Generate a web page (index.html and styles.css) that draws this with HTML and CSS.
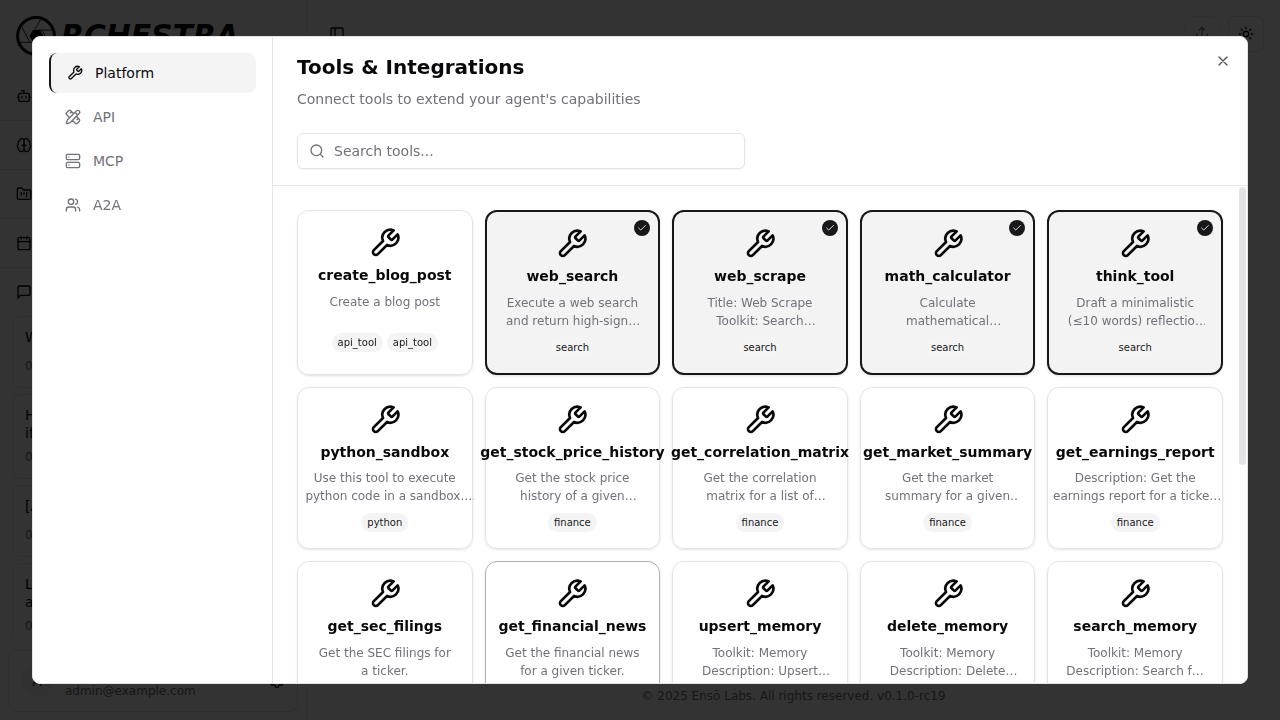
FILE: index.html
```
<!DOCTYPE html>
<html lang="en">

<head>
    <meta charset="utf-8">
    <title>Tools &amp; Integrations</title>
    <link rel="stylesheet" href="styles.css">
</head>

<body>
    <svg class="sprite" aria-hidden="true">
        <symbol id="wrench" viewBox="0 0 24 24"><path d="M14.7 6.3a1 1 0 0 0 0 1.4l1.6 1.6a1 1 0 0 0 1.4 0l3.77-3.77a6 6 0 0 1-7.94 7.94l-6.91 6.91a2.12 2.12 0 0 1-3-3l6.91-6.91a6 6 0 0 1 7.94-7.94l-3.76 3.76z"/></symbol>
        <symbol id="check" viewBox="0 0 24 24"><path d="M20 6 9 17l-5-5"/></symbol>
    </svg>

    <div class="app">
        <aside class="sidebar">
            <div class="logo">
                <svg class="logo-mark" viewBox="0 0 40 40">
                    <circle cx="20" cy="20" r="18.4" fill="none" stroke="#000" stroke-width="3"/>
                    <path d="M5.5 10.5 14 26.3M3 26.3h14M24.5 4 15 20M22 14h15M26 14l8.5 15.5M25 20l-9.5 16" fill="none" stroke="#000" stroke-width=".8"/>
                    <path d="M17 14h7l3.5 6-3.5 6h-7l-3.5-6z"/>
                </svg>
                <span class="logo-text">RCHESTRA</span>
            </div>
            <nav class="menu">
                <div class="menu-item"><svg class="icon" viewBox="0 0 24 24"><path d="M12 8V4H8M2 14h2M20 14h2M15 13v2M9 13v2"/><rect width="16" height="12" x="4" y="8" rx="2"/></svg></div>
                <div class="menu-item"><svg class="icon" viewBox="0 0 24 24"><path d="M12 5a3 3 0 1 0-5.997.125 4 4 0 0 0-2.526 5.77 4 4 0 0 0 .556 6.588A4 4 0 1 0 12 18ZM12 5a3 3 0 1 1 5.997.125 4 4 0 0 1 2.526 5.77 4 4 0 0 1-.556 6.588A4 4 0 1 1 12 18ZM15 13a4.5 4.5 0 0 1-3-4 4.5 4.5 0 0 1-3 4"/></svg></div>
                <div class="menu-item"><svg class="icon" viewBox="0 0 24 24"><path d="M4 20h16a2 2 0 0 0 2-2V8a2 2 0 0 0-2-2h-7.93a2 2 0 0 1-1.66-.9l-.82-1.2A2 2 0 0 0 7.93 3H4a2 2 0 0 0-2 2v13c0 1.1.9 2 2 2ZM8 10v4M12 10v2M16 10v6"/></svg></div>
                <div class="menu-item"><svg class="icon" viewBox="0 0 24 24"><path d="M8 2v4M16 2v4M3 10h18"/><rect width="18" height="18" x="3" y="4" rx="2"/></svg></div>
                <div class="menu-item"><svg class="icon" viewBox="0 0 24 24"><path d="M21 15a2 2 0 0 1-2 2H7l-4 4V5a2 2 0 0 1 2-2h14a2 2 0 0 1 2 2z"/></svg></div>
            </nav>
            <div class="threads">
                <div class="thread"><p>What</p><small>01</small></div>
                <div class="thread"><p>How<br>if</p><small>01</small></div>
                <div class="thread"><p>[API]</p><small>01</small></div>
                <div class="thread"><p>List<br>all</p><small>01</small></div>
            </div>
            <div class="account">
                <span class="avatar">A</span>
                <span class="email">admin@example.com</span>
                <svg class="icon" viewBox="0 0 24 24"><circle cx="12" cy="12" r="3"/><path d="M12.22 2h-.44a2 2 0 0 0-2 2v.18a2 2 0 0 1-1 1.73l-.43.25a2 2 0 0 1-2 0l-.15-.08a2 2 0 0 0-2.73.73l-.22.38a2 2 0 0 0 .73 2.73l.15.1a2 2 0 0 1 1 1.72v.51a2 2 0 0 1-1 1.74l-.15.09a2 2 0 0 0-.73 2.73l.22.38a2 2 0 0 0 2.73.73l.15-.08a2 2 0 0 1 2 0l.43.25a2 2 0 0 1 1 1.73V20a2 2 0 0 0 2 2h.44a2 2 0 0 0 2-2v-.18a2 2 0 0 1 1-1.73l.43-.25a2 2 0 0 1 2 0l.15.08a2 2 0 0 0 2.73-.73l.22-.39a2 2 0 0 0-.73-2.73l-.15-.08a2 2 0 0 1-1-1.74v-.5a2 2 0 0 1 1-1.74l.15-.09a2 2 0 0 0 .73-2.73l-.22-.38a2 2 0 0 0-2.73-.73l-.15.08a2 2 0 0 1-2 0l-.43-.25a2 2 0 0 1-1-1.73V4a2 2 0 0 0-2-2z"/></svg>
            </div>
        </aside>
        <div class="page">
            <header class="topbar">
                <svg class="icon" viewBox="0 0 24 24"><rect width="18" height="18" x="3" y="3" rx="2"/><path d="M9 3v18"/></svg>
                <span class="topbar-btn faded"><svg class="icon" viewBox="0 0 24 24"><path d="M12 2v13M16 6l-4-4-4 4M4 12v8a2 2 0 0 0 2 2h12a2 2 0 0 0 2-2v-8"/></svg></span>
                <span class="topbar-btn"><svg class="icon" viewBox="0 0 24 24"><circle cx="12" cy="12" r="4"/><path d="M12 2v2M12 20v2M4.93 4.93l1.41 1.41M17.66 17.66l1.41 1.41M2 12h2M20 12h2M6.34 17.66l-1.41 1.41M19.07 4.93l-1.41 1.41"/></svg></span>
            </header>
            <footer class="footer">© 2025 Ensō Labs. All rights reserved. v0.1.0-rc19</footer>
        </div>
    </div>

    <div class="overlay">
        <div class="dialog">
            <nav class="tabs">
                <a class="tab active"><svg class="icon"><use href="#wrench"/></svg>Platform</a>
                <a class="tab"><svg class="icon" viewBox="0 0 24 24"><path d="M13 7 8.7 2.7a2.41 2.41 0 0 0-3.4 0L2.7 5.3a2.41 2.41 0 0 0 0 3.4L7 13M8 6l2-2M18 16l2-2M17 11l4.3 4.3c.94.94.94 2.46 0 3.4l-2.6 2.6c-.94.94-2.46.94-3.4 0L11 17M21.174 6.812a1 1 0 0 0-3.986-3.987L3.842 16.174a2 2 0 0 0-.5.83l-1.321 4.352a.5.5 0 0 0 .623.622l4.353-1.32a2 2 0 0 0 .83-.497zM15 5l4 4"/></svg>API</a>
                <a class="tab"><svg class="icon" viewBox="0 0 24 24"><rect width="20" height="8" x="2" y="2" rx="2"/><rect width="20" height="8" x="2" y="14" rx="2"/><path d="M6 6h.01M6 18h.01"/></svg>MCP</a>
                <a class="tab"><svg class="icon" viewBox="0 0 24 24"><path d="M16 21v-2a4 4 0 0 0-4-4H6a4 4 0 0 0-4 4v2M22 21v-2a4 4 0 0 0-3-3.87M16 3.13a4 4 0 0 1 0 7.75"/><circle cx="9" cy="7" r="4"/></svg>A2A</a>
            </nav>

            <section class="panel">
                <header class="panel-header">
                    <h2>Tools &amp; Integrations</h2>
                    <p>Connect tools to extend your agent's capabilities</p>
                    <div class="search">
                        <svg class="icon" viewBox="0 0 24 24"><circle cx="11" cy="11" r="8"/><path d="m21 21-4.3-4.3"/></svg>
                        <span>Search tools...</span>
                    </div>
                </header>

                <div class="grid">
                    <div class="card">
                        <svg class="icon"><use href="#wrench"/></svg>
                        <h3>create_blog_post</h3>
                        <p>Create a blog post</p>
                        <div class="tags"><span>api_tool</span><span>api_tool</span></div>
                    </div>
                    <div class="card selected">
                        <span class="check"><svg class="icon"><use href="#check"/></svg></span>
                        <svg class="icon"><use href="#wrench"/></svg>
                        <h3>web_search</h3>
                        <p>Execute a web search and return high-signal results</p>
                        <div class="tags"><span>search</span></div>
                    </div>
                    <div class="card selected">
                        <span class="check"><svg class="icon"><use href="#check"/></svg></span>
                        <svg class="icon"><use href="#wrench"/></svg>
                        <h3>web_scrape</h3>
                        <p>Title: Web Scrape<br>Toolkit: Search<br>Description: Scrape</p>
                        <div class="tags"><span>search</span></div>
                    </div>
                    <div class="card selected">
                        <span class="check"><svg class="icon"><use href="#check"/></svg></span>
                        <svg class="icon"><use href="#wrench"/></svg>
                        <h3>math_calculator</h3>
                        <p>Calculate<br>mathematical expressions</p>
                        <div class="tags"><span>search</span></div>
                    </div>
                    <div class="card selected">
                        <span class="check"><svg class="icon"><use href="#check"/></svg></span>
                        <svg class="icon"><use href="#wrench"/></svg>
                        <h3>think_tool</h3>
                        <p>Draft a minimalistic (≤10 words) reflection on the next step</p>
                        <div class="tags"><span>search</span></div>
                    </div>

                    <div class="card">
                        <svg class="icon"><use href="#wrench"/></svg>
                        <h3>python_sandbox</h3>
                        <p class="wide">Use this tool to execute<br>python code in a sandbox.<br>Returns the output</p>
                        <div class="tags"><span>python</span></div>
                    </div>
                    <div class="card">
                        <svg class="icon"><use href="#wrench"/></svg>
                        <h3>get_stock_price_history</h3>
                        <p>Get the stock price history of a given ticker symbol</p>
                        <div class="tags"><span>finance</span></div>
                    </div>
                    <div class="card">
                        <svg class="icon"><use href="#wrench"/></svg>
                        <h3>get_correlation_matrix</h3>
                        <p>Get the correlation matrix for a list of tickers</p>
                        <div class="tags"><span>finance</span></div>
                    </div>
                    <div class="card">
                        <svg class="icon"><use href="#wrench"/></svg>
                        <h3>get_market_summary</h3>
                        <p>Get the market summary for a given market</p>
                        <div class="tags"><span>finance</span></div>
                    </div>
                    <div class="card">
                        <svg class="icon"><use href="#wrench"/></svg>
                        <h3>get_earnings_report</h3>
                        <p class="wide">Description: Get the<br><span class="cut">earnings report for a ticke…</span></p>
                        <div class="tags"><span>finance</span></div>
                    </div>

                    <div class="card">
                        <svg class="icon"><use href="#wrench"/></svg>
                        <h3>get_sec_filings</h3>
                        <p>Get the SEC filings for a ticker.</p>
                    </div>
                    <div class="card hover">
                        <svg class="icon"><use href="#wrench"/></svg>
                        <h3>get_financial_news</h3>
                        <p>Get the financial news for a given ticker.</p>
                    </div>
                    <div class="card">
                        <svg class="icon"><use href="#wrench"/></svg>
                        <h3>upsert_memory</h3>
                        <p>Toolkit: Memory<br>Description: Upsert<br>memory</p>
                    </div>
                    <div class="card">
                        <svg class="icon"><use href="#wrench"/></svg>
                        <h3>delete_memory</h3>
                        <p>Toolkit: Memory<br>Description: Delete<br>memory</p>
                    </div>
                    <div class="card">
                        <svg class="icon"><use href="#wrench"/></svg>
                        <h3>search_memory</h3>
                        <p>Toolkit: Memory<br>Description: Search for<br>memories</p>
                    </div>
                </div>
            </section>

            <span class="scrollbar"></span>
            <svg class="icon close" viewBox="0 0 24 24"><path d="M18 6 6 18M6 6l12 12"/></svg>
        </div>
    </div>
</body>

</html>
```
FILE: styles.css
```
* {
    box-sizing: border-box;
    margin: 0;
    padding: 0;
}

body {
    width: 1280px;
    height: 720px;
    overflow: hidden;
    background: #fff;
    color: #09090b;
    font-family: "DejaVu Sans", sans-serif;
    font-size: 14px;
    line-height: 20px;
}

.sprite {
    display: none;
}

.icon {
    flex-shrink: 0;
    width: 16px;
    height: 16px;
    fill: none;
    stroke: currentColor;
    stroke-width: 2;
    stroke-linecap: round;
    stroke-linejoin: round;
}

/* app behind the dialog */
.app {
    display: flex;
    height: 720px;
}

.sidebar {
    display: flex;
    flex-direction: column;
    width: 307px;
    border-right: 1px solid #e4e4e7;
}

.logo {
    display: flex;
    align-items: center;
    gap: 5px;
    height: 72px;
    padding-left: 16px;
}

.logo-mark {
    width: 40px;
    height: 40px;
}

.logo-text {
    font-size: 29.8px;
    font-style: italic;
    font-weight: bold;
}

.menu-item {
    display: flex;
    align-items: center;
    height: 49px;
    padding-left: 16px;
    border-bottom: 1px solid #e4e4e7;
}

.menu-item:last-child {
    height: 48px;
    border-bottom: 0;
}

.threads {
    display: flex;
    flex-direction: column;
    gap: 6px;
    height: 320px;
    padding: 0 12px;
    overflow: hidden;
}

.thread {
    flex-shrink: 0;
    padding: 11px 12px;
    border: 1px solid #e4e4e7;
    border-radius: 8px;
}

.thread p {
    min-height: 23px;
    line-height: 18px;
}

.thread small {
    display: block;
    margin-top: 5px;
    color: #71717a;
    font-size: 12px;
}

.account {
    display: flex;
    align-items: center;
    gap: 12px;
    height: 62px;
    margin: 14px 8px 0;
    padding: 0 12px;
    border: 1px solid #e4e4e7;
    border-radius: 8px;
}

.avatar {
    width: 32px;
    height: 32px;
    border-radius: 50%;
    background: #f4f4f5;
    line-height: 32px;
    text-align: center;
}

.email {
    flex: 1;
    padding-top: 20px;
    color: #71717a;
    font-size: 12px;
}

.page {
    display: flex;
    flex: 1;
    flex-direction: column;
    justify-content: space-between;
}

.topbar {
    display: flex;
    align-items: center;
    gap: 8px;
    height: 68px;
    padding: 0 16px 0 22px;
}

.topbar-btn {
    display: flex;
    align-items: center;
    justify-content: center;
    width: 36px;
    height: 36px;
    border: 1px solid #e4e4e7;
    border-radius: 6px;
}

.topbar-btn.faded {
    margin-left: auto;
    opacity: .5;
}

.footer {
    padding: 14px 0;
    color: #71717a;
    font-size: 12px;
    text-align: center;
}

/* dialog */
.overlay {
    position: fixed;
    inset: 0;
    display: flex;
    align-items: center;
    justify-content: center;
    background: rgba(0, 0, 0, .8);
}

.dialog {
    position: relative;
    display: flex;
    width: 1216px;
    height: 648px;
    overflow: hidden;
    border: 1px solid #e4e4e7;
    border-radius: 8px;
    background: #fff;
}

.close {
    position: absolute;
    top: 16px;
    right: 16px;
    opacity: .7;
}

.scrollbar {
    position: absolute;
    top: 150px;
    right: 1px;
    width: 7px;
    height: 278px;
    border-radius: 4px;
    background: #e4e4e7;
}

.tabs {
    display: flex;
    flex-direction: column;
    gap: 4px;
    width: 240px;
    padding: 16px;
    border-right: 1px solid #e4e4e7;
}

.tab {
    display: flex;
    align-items: center;
    gap: 12px;
    height: 40px;
    padding: 0 16px;
    border-radius: 8px;
    color: #71717a;
}

.tab.active {
    border-left: 2px solid #18181b;
    background: #f4f4f5;
    color: #09090b;
}

.panel {
    display: flex;
    flex: 1;
    flex-direction: column;
    min-width: 0;
}

.panel-header {
    flex-shrink: 0;
    height: 149px;
    padding: 16px 24px;
    border-bottom: 1px solid #e4e4e7;
}

.panel-header h2 {
    font-size: 20px;
    line-height: 28px;
}

.panel-header p {
    margin-top: 8px;
    color: #71717a;
}

.search {
    display: flex;
    align-items: center;
    gap: 9px;
    width: 448px;
    height: 36px;
    margin-top: 24px;
    padding: 0 11px;
    border: 1px solid #e4e4e7;
    border-radius: 6px;
    color: #71717a;
    box-shadow: 0 1px 2px rgba(0, 0, 0, .05);
}

.grid {
    display: grid;
    grid-template-columns: repeat(5, minmax(0, 1fr));
    grid-auto-rows: max-content;
    gap: 12px;
    padding: 24px;
    overflow: hidden;
}

.card {
    position: relative;
    display: flex;
    flex-direction: column;
    align-items: center;
    gap: 8px;
    padding: 16px;
    border: 1px solid #e4e4e7;
    border-radius: 12px;
    box-shadow: 0 1px 3px rgba(0, 0, 0, .1), 0 1px 2px -1px rgba(0, 0, 0, .1);
}

/* last row runs past the dialog's edge */
.card:nth-child(n + 11) {
    height: 162.5px;
}

.card.selected {
    border: 2px solid #18181b;
    background: #f3f3f3;
}

.card.hover {
    border-color: #afafb0;
}

.card > .icon {
    width: 32px;
    height: 32px;
}

.card h3 {
    font-size: 14px;
    line-height: 17.5px;
}

.card p {
    display: -webkit-box;
    flex-shrink: 0;
    min-width: 100%;
    min-height: 32px;
    overflow: hidden;
    color: #71717a;
    font-size: 12px;
    line-height: 18px;
    text-align: center;
    -webkit-box-orient: vertical;
    -webkit-line-clamp: 2;
}

.card p.wide {
    width: 178px;
}

.cut {
    margin-left: 4px;
    white-space: nowrap;
}

.tags {
    display: flex;
    gap: 4px;
}

.tags span {
    padding: 2px 6px;
    border-radius: 10px;
    background: #f4f4f5;
    color: #18181b;
    font-size: 10px;
    line-height: 15px;
}

.check {
    position: absolute;
    top: 8px;
    right: 8px;
    display: flex;
    align-items: center;
    justify-content: center;
    width: 16px;
    height: 16px;
    border-radius: 50%;
    background: #18181b;
    color: #fff;
}

.check .icon {
    width: 10px;
    height: 10px;
}
```
